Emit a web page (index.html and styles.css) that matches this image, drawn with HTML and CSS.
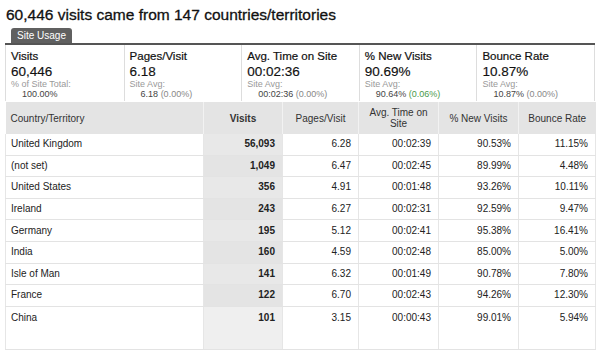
FILE: index.html
```html
<!DOCTYPE html>
<html>
<head>
<meta charset="utf-8">
<link rel="stylesheet" href="styles.css">
</head>
<body>
<div class="page">
  <h1 class="title">60,446 visits came from 147 countries/territories</h1>
  <div class="tabs"><span class="tab">Site Usage</span></div>
  <div class="metrics">
    <div class="metric">
      <div class="m-label">Visits</div>
      <div class="m-value">60,446</div>
      <div class="m-sub">% of Site Total:</div>
      <div class="m-avg">100.00%</div>
    </div>
    <div class="metric">
      <div class="m-label">Pages/Visit</div>
      <div class="m-value">6.18</div>
      <div class="m-sub">Site Avg:</div>
      <div class="m-avg">6.18 <span class="pct">(0.00%)</span></div>
    </div>
    <div class="metric">
      <div class="m-label">Avg. Time on Site</div>
      <div class="m-value">00:02:36</div>
      <div class="m-sub">Site Avg:</div>
      <div class="m-avg">00:02:36 <span class="pct">(0.00%)</span></div>
    </div>
    <div class="metric">
      <div class="m-label">% New Visits</div>
      <div class="m-value">90.69%</div>
      <div class="m-sub">Site Avg:</div>
      <div class="m-avg">90.64% <span class="pct pos">(0.06%)</span></div>
    </div>
    <div class="metric">
      <div class="m-label">Bounce Rate</div>
      <div class="m-value">10.87%</div>
      <div class="m-sub">Site Avg:</div>
      <div class="m-avg">10.87% <span class="pct">(0.00%)</span></div>
    </div>
  </div>
  <table class="data">
    <colgroup>
      <col class="c1"><col class="c2"><col class="c3"><col class="c4"><col class="c5"><col class="c6">
    </colgroup>
    <thead>
      <tr>
        <th class="left">Country/Territory</th>
        <th class="bold">Visits</th>
        <th>Pages/Visit</th>
        <th>Avg. Time on Site</th>
        <th>% New Visits</th>
        <th>Bounce Rate</th>
      </tr>
    </thead>
    <tbody>
      <tr><td class="name">United Kingdom</td><td class="visits">56,093</td><td>6.28</td><td>00:02:39</td><td>90.53%</td><td>11.15%</td></tr>
      <tr><td class="name">(not set)</td><td class="visits">1,049</td><td>6.47</td><td>00:02:45</td><td>89.99%</td><td>4.48%</td></tr>
      <tr><td class="name">United States</td><td class="visits">356</td><td>4.91</td><td>00:01:48</td><td>93.26%</td><td>10.11%</td></tr>
      <tr><td class="name">Ireland</td><td class="visits">243</td><td>6.27</td><td>00:02:31</td><td>92.59%</td><td>9.47%</td></tr>
      <tr><td class="name">Germany</td><td class="visits">195</td><td>5.12</td><td>00:02:41</td><td>95.38%</td><td>16.41%</td></tr>
      <tr><td class="name">India</td><td class="visits">160</td><td>4.59</td><td>00:02:48</td><td>85.00%</td><td>5.00%</td></tr>
      <tr><td class="name">Isle of Man</td><td class="visits">141</td><td>6.32</td><td>00:01:49</td><td>90.78%</td><td>7.80%</td></tr>
      <tr><td class="name">France</td><td class="visits">122</td><td>6.70</td><td>00:02:43</td><td>94.26%</td><td>12.30%</td></tr>
      <tr class="last"><td class="name">China</td><td class="visits">101</td><td>3.15</td><td>00:00:43</td><td>99.01%</td><td>5.94%</td></tr>
    </tbody>
  </table>
</div>
</body>
</html>
```

FILE: styles.css
```css
html, body {
  margin: 0;
  padding: 0;
  background: #fff;
}
body {
  font-family: "Liberation Sans", Arial, sans-serif;
  color: #222;
}
.page {
  width: 590px;
  padding: 0 5px;
}
.title {
  margin: 0;
  padding-top: 5px;
  padding-left: 1px;
  font-size: 15.5px;
  line-height: 20px;
  font-weight: normal;
  color: #111;
  -webkit-text-stroke: 0.3px #111;
}
.tabs {
  display: flex;
  padding-left: 6px;
  margin-top: 3px;
  border-bottom: 2px solid #555;
}
.tab {
  display: block;
  width: 61px;
  height: 15px;
  background: #606060;
  color: #fff;
  font-size: 10px;
  line-height: 16px;
  text-align: center;
  border-radius: 3px 3px 0 0;
}
.metrics {
  display: grid;
  grid-template-columns: repeat(5, 1fr);
  height: 56px;
  border-left: 1px solid #ddd;
  border-right: 1px solid #ddd;
}
.metric {
  padding: 5px 5px 0 5px;
  border-left: 1px solid #ddd;
}
.metric:first-child {
  border-left: none;
}
.m-label {
  font-size: 11.5px;
  line-height: 13px;
  color: #111;
  -webkit-text-stroke: 0.2px #111;
}
.m-value {
  font-size: 13.5px;
  line-height: 17px;
  color: #111;
  -webkit-text-stroke: 0.15px #111;
}
.m-sub {
  font-size: 9px;
  line-height: 9px;
  color: #999;
}
.m-avg {
  font-size: 9px;
  line-height: 11px;
  color: #444;
  padding-left: 11px;
}
.pct {
  color: #888;
}
.pct.pos {
  color: #4a9a4a;
}
.data {
  width: 590px;
  border-collapse: collapse;
  table-layout: fixed;
  font-size: 10px;
  margin-top: 1px;
}
.c1 { width: 198px; }
.c2 { width: 79px; }
.c3 { width: 76px; }
.c4 { width: 80px; }
.c5 { width: 80px; }
.c6 { width: 77px; }
.data th {
  background: #e4e4e4;
  color: #333;
  font-weight: normal;
  font-size: 10px;
  line-height: 11px;
  height: 32px;
  padding: 0 6px;
  text-align: center;
  border-left: 1px solid #f2f2f2;
  vertical-align: middle;
}
.data th.left {
  text-align: left;
  padding-left: 5px;
  border-left: none;
}
.data th.bold {
  font-weight: bold;
}
.data td {
  height: 20.6px;
  padding: 0 7px;
  text-align: right;
  color: #222;
  border-left: 1px solid #e6e6e6;
  border-bottom: 1px solid #e3e3e3;
  vertical-align: middle;
  line-height: 12px;
}
.data td.name {
  text-align: left;
  padding-left: 5px;
  border-left: 1px solid #e6e6e6;
}
.data td:last-child {
  border-right: 1px solid #e6e6e6;
}
.data td.visits {
  background: #e8e8e8;
  font-weight: bold;
}
.data tr:nth-child(even) td.visits {
  background: #e4e4e4;
}
.data tr.last td {
  height: 37px;
  vertical-align: top;
  padding-top: 5px;
}
.data tr.last td.visits {
  background: #efefef;
}
```
